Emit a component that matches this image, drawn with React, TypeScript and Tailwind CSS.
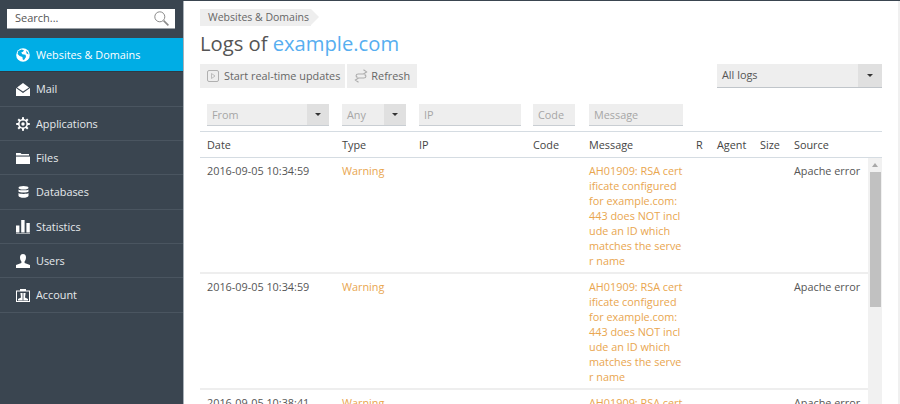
import { useState } from "react";

type IconProps = { className?: string };

function GlobeIcon({ className }: IconProps) {
  return (
    <svg viewBox="0 0 14 14" className={className} fill="none">
      <circle cx="7" cy="7" r="6.8" fill="#fff" />
      <path d="M2.2 3 5.5 1.4 8 2.2 7 3.8 5.2 4.4 6.4 6.2 9.6 6.8 10 9 8 12 6.8 11.6 6.4 9 3.6 8 1.6 6Z" fill="#00ade5" />
      <path d="M10 2.6 12 4.6 12.6 6.6 10.6 5.4Z" fill="#00ade5" />
    </svg>
  );
}

function MailIcon({ className }: IconProps) {
  return (
    <svg viewBox="0 0 14 13" className={className} fill="#fff">
      <path d="M7 0 13 4.4 7 8.6 1 4.4Z" />
      <path d="M0 5 7 10 14 5V13H0Z" />
    </svg>
  );
}

function GearIcon({ className }: IconProps) {
  const spokes = [0, 45, 90, 135, 180, 225, 270, 315];
  return (
    <svg viewBox="0 0 14 14" className={className} fill="none">
      {spokes.map((a) => (
        <rect key={a} x="6" y="0.2" width="2" height="3" fill="#fff" transform={`rotate(${a} 7 7)`} />
      ))}
      <circle cx="7" cy="7" r="4.2" stroke="#fff" strokeWidth="1.5" />
      <circle cx="7" cy="7" r="1.7" fill="#fff" />
    </svg>
  );
}

function FolderIcon({ className }: IconProps) {
  return (
    <svg viewBox="0 0 14 11" className={className} fill="#fff">
      <path d="M0 0H4.5L5.5 1H13V2.4H0Z" />
      <path d="M0 3.6H14V11H0Z" />
    </svg>
  );
}

function DatabaseIcon({ className }: IconProps) {
  return (
    <svg viewBox="0 0 11 12" className={className} fill="#fff">
      <ellipse cx="5.5" cy="1.8" rx="5" ry="1.8" />
      <path d="M.5 3.4C1.5 4.6 9.5 4.6 10.5 3.4V5.4C9.5 6.8 1.5 6.8.5 5.4Z" />
      <path d="M.5 7C1.5 8.2 9.5 8.2 10.5 7V10C9.5 12.4 1.5 12.4.5 10Z" />
    </svg>
  );
}

function BarsIcon({ className }: IconProps) {
  return (
    <svg viewBox="0 0 14 14" className={className} fill="#fff">
      <rect x="0" y="5.5" width="3.4" height="7" />
      <rect x="5.2" y="0" width="3.4" height="12.5" />
      <rect x="10.4" y="3" width="3.4" height="9.5" />
      <rect x="0" y="13" width="14" height="1" fillOpacity="0.55" />
    </svg>
  );
}

function UserIcon({ className }: IconProps) {
  return (
    <svg viewBox="0 0 14 14" className={className} fill="#fff">
      <path d="M7 0C9 0 10 1.4 10 3.4 10 5.2 9.2 6.6 8.6 7.4V9L14 11V14H0V11L5.4 9V7.4C4.8 6.6 4 5.2 4 3.4 4 1.4 5 0 7 0Z" />
    </svg>
  );
}

function AccountIcon({ className }: IconProps) {
  return (
    <svg viewBox="0 0 14 13" className={className} fill="none">
      <rect x="0.5" y="2" width="13" height="10.5" stroke="#fff" />
      <rect x="4" y="0" width="6" height="2" fill="#fff" />
      <path d="M2 11.5V10L5 8.5 4.4 4H9.6L9 8.5 12 10V11.5Z" fill="#fff" />
      <rect x="6.6" y="3" width="0.8" height="8.5" fill="#3a4550" />
    </svg>
  );
}

function SearchIcon({ className }: IconProps) {
  return (
    <svg viewBox="0 0 15 15" className={className} fill="none" stroke="#8a8a8a">
      <circle cx="5.8" cy="5.8" r="5" strokeWidth="1" />
      <path d="M9.6 9.6 14.4 14.4" strokeWidth="1.6" />
    </svg>
  );
}

function PlayBoxIcon({ className }: IconProps) {
  return (
    <svg viewBox="0 0 12 12" className={className} fill="none" stroke="#b0b0b0">
      <rect x="0.5" y="0.5" width="11" height="11" rx="1.5" />
      <path d="M4.5 3.5 8 6 4.5 8.5Z" strokeWidth="0.8" />
    </svg>
  );
}

function RefreshIcon({ className }: IconProps) {
  return (
    <svg viewBox="0 0 14 14" className={className} fill="none" stroke="#ababab" strokeWidth="1.1">
      <path d="M9.5 .8 12.6 2.9 9.5 5H4.2C1.6 5 1.4 8 3.6 8.4" />
      <path d="M4.5 13.2 1.4 11.1 4.5 9H9.8C12.4 9 12.6 6 10.4 5.6" />
    </svg>
  );
}

function Caret() {
  return <span className="w-0 h-0 border-l-[3px] border-r-[3px] border-t-[3px] border-l-transparent border-r-transparent border-t-[#333]" />;
}

const navItems = [
  { label: "Websites & Domains", icon: GlobeIcon, size: "w-[14px] h-[14px]", active: true },
  { label: "Mail", icon: MailIcon, size: "w-[14px] h-[13px]" },
  { label: "Applications", icon: GearIcon, size: "w-[14px] h-[14px]" },
  { label: "Files", icon: FolderIcon, size: "w-[14px] h-[11px]" },
  { label: "Databases", icon: DatabaseIcon, size: "w-[11px] h-[12px]" },
  { label: "Statistics", icon: BarsIcon, size: "w-[14px] h-[14px]" },
  { label: "Users", icon: UserIcon, size: "w-[14px] h-[14px]" },
  { label: "Account", icon: AccountIcon, size: "w-[14px] h-[13px]" },
];

// the log viewer breaks the message at fixed points, mid word
const messageLines = [
  "AH01909: RSA cert",
  "ificate configured",
  "for example.com:",
  "443 does NOT incl",
  "ude an ID which",
  "matches the serve",
  "r name",
];

const rows = [
  { date: "2016-09-05 10:34:59" },
  { date: "2016-09-05 10:34:59" },
  { date: "2016-09-05 10:38:41" },
];

export default function App() {
  const [query, setQuery] = useState("");

  return (
    <div className="w-[900px] h-[404px] overflow-hidden flex flex-col bg-white text-[10.85px] text-[#555] font-['Open_Sans',sans-serif]">
      <div className="h-px bg-[#3a4550] shrink-0" />
      <div className="flex flex-1 min-h-0">
        {/* Sidebar */}
        <aside className="w-[184px] shrink-0 bg-[#3a4550] border-r border-[#a9b1b8] flex flex-col">
          <div className="h-[37px] px-[7px] pt-2 shrink-0">
            <div className="h-5 w-[168px] bg-white border-b border-[#9aa0a6] flex items-center pl-2 pr-[6px]">
              <input
                value={query}
                onChange={(e) => setQuery(e.target.value)}
                placeholder="Search..."
                className="flex-1 min-w-0 bg-transparent outline-none text-[11px] text-[#555] placeholder:text-[#555]"
              />
              <SearchIcon className="w-[15px] h-[15px]" />
            </div>
          </div>
          {navItems.map((item) => {
            const Icon = item.icon;
            return (
              <div
                key={item.label}
                className={`h-[34.33px] shrink-0 flex items-center pt-px border-b ${
                  item.active ? "bg-[#00ade5] border-[#2f3a44] text-white" : "border-[#4a5560] text-[#e6eaed]"
                }`}
              >
                <span className="w-[36px] pl-4 pr-[6px] shrink-0 flex items-center justify-center">
                  <Icon className={item.size} />
                </span>
                <span>{item.label}</span>
              </div>
            );
          })}
        </aside>

        {/* Main */}
        <main className="flex-1 min-w-0 flex flex-col pl-4 pr-[16px] border-r-2 border-r-[#f0f0f0]">
          <div className="pt-2 flex shrink-0">
            <span className="h-[17px] bg-[#eeeeee] pl-2 pr-[2px] flex items-center text-[10.5px] text-[#666]">Websites &amp; Domains</span>
            <span className="w-0 h-0 border-y-[8.5px] border-l-[8px] border-y-transparent border-l-[#eeeeee]" />
          </div>
          <h1 className="mt-[2px] h-[30px] shrink-0 leading-[30px] text-[20.2px] text-[#555]">
            Logs of <span className="text-[#56aef0]">example.com</span>
          </h1>
          <div className="mt-[6px] flex items-start justify-between shrink-0">
            <div className="flex gap-[2px]">
              <button className="h-6 pl-[7px] pr-[5px] bg-[#eeeeee] flex items-center gap-[5px] text-[#666]">
                <PlayBoxIcon className="w-3 h-3" />
                Start real-time updates
              </button>
              <button className="h-6 px-[7px] bg-[#eeeeee] flex items-center gap-[3px] text-[#666]">
                <RefreshIcon className="w-[14px] h-[14px]" />
                Refresh
              </button>
            </div>
            <div className="w-[165px] h-6 flex bg-[#eeeeee] border-b border-[#c0c5ca]">
              <span className="flex-1 flex items-center pl-[5px] text-[#555]">All logs</span>
              <span className="w-6 bg-[#e0e0e0] flex items-center justify-center"><Caret /></span>
            </div>
          </div>

          {/* Filters */}
          <div className="mt-4 h-[22px] flex pl-[7px] shrink-0 text-[#a6a6a6]">
            <div className="w-[122px] flex bg-[#eeeeee] border-b border-[#c9ced3]">
              <span className="flex-1 flex items-center pl-[5px] pt-px">From</span>
              <span className="w-[22px] bg-[#e0e0e0] flex items-center justify-center"><Caret /></span>
            </div>
            <div className="ml-[13px] w-[64px] flex bg-[#eeeeee] border-b border-[#c9ced3]">
              <span className="flex-1 flex items-center pl-[5px] pt-px">Any</span>
              <span className="w-[22px] bg-[#e0e0e0] flex items-center justify-center"><Caret /></span>
            </div>
            <div className="ml-[13px] w-[102px] flex items-center pl-[5px] pt-px bg-[#eeeeee] border-b border-[#c9ced3]">IP</div>
            <div className="ml-[12px] w-[42px] flex items-center pl-[5px] pt-px bg-[#eeeeee] border-b border-[#c9ced3]">Code</div>
            <div className="ml-[14px] w-[94px] flex items-center pl-[5px] pt-px bg-[#eeeeee] border-b border-[#c9ced3]">Message</div>
          </div>

          {/* Table header */}
          <div className="mt-[5px] h-[27px] shrink-0 flex items-center pl-[7px] pt-px border-y border-[#d5dce2] text-[#444]">
            <span className="w-[135px]">Date</span>
            <span className="w-[77px]">Type</span>
            <span className="w-[114px]">IP</span>
            <span className="w-[56px]">Code</span>
            <span className="w-[107px]">Message</span>
            <span className="w-[21px]">R</span>
            <span className="w-[43px]">Agent</span>
            <span className="w-[34px]">Size</span>
            <span>Source</span>
          </div>

          {/* Table body */}
          <div className="flex-1 min-h-0 flex overflow-hidden">
            <div className="flex-1 min-w-0">
              {rows.map((row, i) => (
                <div key={i} className="h-[116px] flex pl-[7px] pt-[5px] border-b-2 border-[#eeeeee] leading-[15px]">
                  <span className="w-[135px] shrink-0 text-[#555]">{row.date}</span>
                  <span className="w-[77px] shrink-0 text-[#e9a64f]">Warning</span>
                  <span className="w-[114px] shrink-0" />
                  <span className="w-[56px] shrink-0" />
                  <div className="w-[94px] shrink-0 text-[#e9a64f] whitespace-nowrap">
                    {messageLines.map((line) => (
                      <div key={line}>{line}</div>
                    ))}
                  </div>
                  <span className="w-[111px] shrink-0" />
                  <span className="whitespace-nowrap text-[#555]">Apache error</span>
                </div>
              ))}
            </div>
            <div className="w-[14px] shrink-0 bg-[#f1f1f1] flex flex-col items-center">
              <span className="mt-[5px] w-0 h-0 border-l-[3px] border-r-[3px] border-b-[4px] border-l-transparent border-r-transparent border-b-[#a8a8a8]" />
              <span className="mt-[5px] w-[11px] h-[135px] bg-[#c1c1c1]" />
            </div>
          </div>
        </main>
      </div>
    </div>
  );
}
